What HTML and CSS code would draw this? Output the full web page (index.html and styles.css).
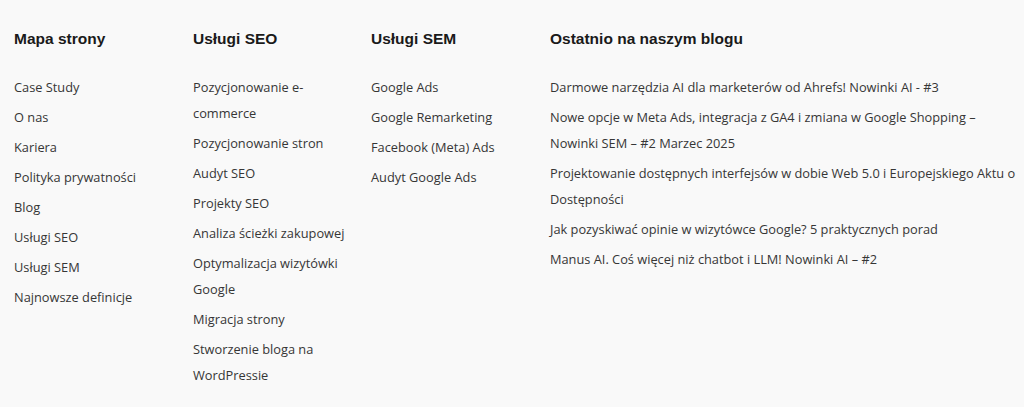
FILE: index.html
```html
<!DOCTYPE html>
<html lang="pl">
<head>
<meta charset="utf-8">
<title>Footer</title>
<link rel="stylesheet" href="styles.css">
</head>
<body>
<footer class="footer">
  <section class="col">
    <h3 class="col-title">Mapa strony</h3>
    <ul class="links">
      <li><a href="#">Case Study</a></li>
      <li><a href="#">O nas</a></li>
      <li><a href="#">Kariera</a></li>
      <li><a href="#">Polityka prywatności</a></li>
      <li><a href="#">Blog</a></li>
      <li><a href="#">Usługi SEO</a></li>
      <li><a href="#">Usługi SEM</a></li>
      <li><a href="#">Najnowsze definicje</a></li>
    </ul>
  </section>
  <section class="col">
    <h3 class="col-title">Usługi SEO</h3>
    <ul class="links">
      <li><a href="#">Pozycjonowanie e-commerce</a></li>
      <li><a href="#">Pozycjonowanie stron</a></li>
      <li><a href="#">Audyt SEO</a></li>
      <li><a href="#">Projekty SEO</a></li>
      <li><a href="#">Analiza ścieżki zakupowej</a></li>
      <li><a href="#">Optymalizacja wizytówki Google</a></li>
      <li><a href="#">Migracja strony</a></li>
      <li><a href="#">Stworzenie bloga na WordPressie</a></li>
    </ul>
  </section>
  <section class="col">
    <h3 class="col-title">Usługi SEM</h3>
    <ul class="links">
      <li><a href="#">Google Ads</a></li>
      <li><a href="#">Google Remarketing</a></li>
      <li><a href="#">Facebook (Meta) Ads</a></li>
      <li><a href="#">Audyt Google Ads</a></li>
    </ul>
  </section>
  <section class="col col-wide">
    <h3 class="col-title">Ostatnio na naszym blogu</h3>
    <ul class="links">
      <li><a href="#">Darmowe narzędzia AI dla marketerów od Ahrefs! Nowinki AI - #3</a></li>
      <li><a href="#">Nowe opcje w Meta Ads, integracja z GA4 i zmiana w Google Shopping – Nowinki SEM – #2 Marzec 2025</a></li>
      <li><a href="#">Projektowanie dostępnych interfejsów w dobie Web 5.0 i Europejskiego Aktu o Dostępności</a></li>
      <li><a href="#">Jak pozyskiwać opinie w wizytówce Google? 5 praktycznych porad</a></li>
      <li><a href="#">Manus AI. Coś więcej niż chatbot i LLM! Nowinki AI – #2</a></li>
    </ul>
  </section>
</footer>
</body>
</html>
```

FILE: styles.css
```css
html, body {
  margin: 0;
  padding: 0;
  background: #f9f9f9;
}
body {
  font-family: "Open Sans", "Noto Sans", sans-serif;
  color: #3a3a3a;
}
.footer {
  display: grid;
  grid-template-columns: 179px 178px 179px 1fr;
  padding: 28px 4px 0 14px;
}
.col {
  padding-right: 22px;
}
.col-wide {
  padding-right: 0;
}
.col-title {
  margin: 0 0 24px;
  font-family: "Liberation Sans", Arial, sans-serif;
  font-weight: 700;
  font-size: 15.5px;
  line-height: 22px;
  color: #1a1a1a;
}
.links {
  list-style: none;
  margin: 0;
  padding: 0;
  display: flex;
  flex-direction: column;
  gap: 4px;
}
.links a {
  font-size: 12.8px;
  line-height: 26px;
  color: #363636;
  text-decoration: none;
}
```
